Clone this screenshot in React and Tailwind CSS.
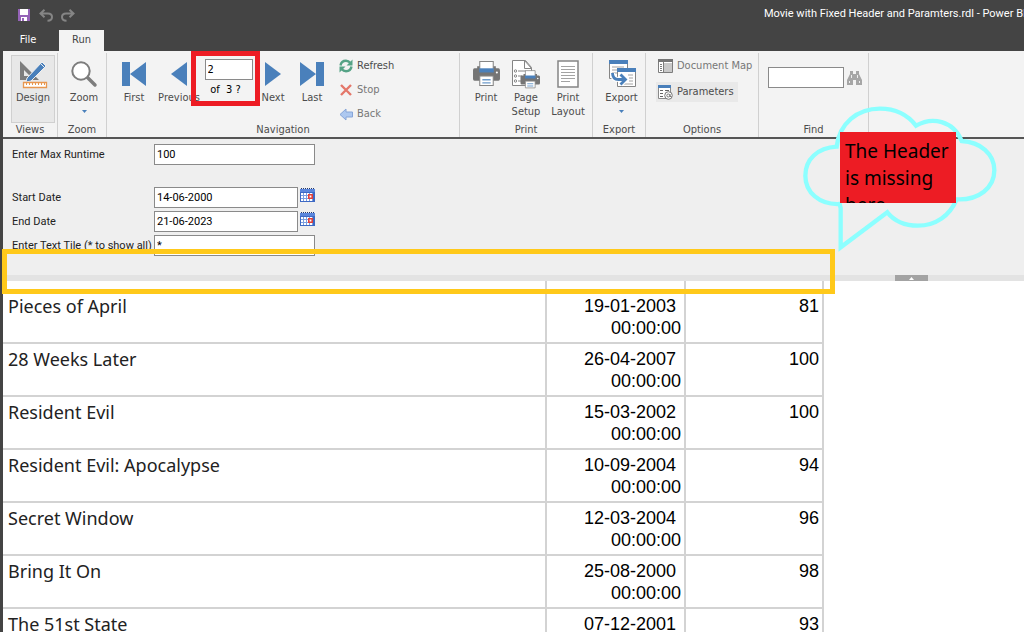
const MOVIES = [
  { title: 'Pieces of April', date: '19-01-2003', runtime: 81 },
  { title: '28 Weeks Later', date: '26-04-2007', runtime: 100 },
  { title: 'Resident Evil', date: '15-03-2002', runtime: 100 },
  { title: 'Resident Evil: Apocalypse', date: '10-09-2004', runtime: 94 },
  { title: 'Secret Window', date: '12-03-2004', runtime: 96 },
  { title: 'Bring It On', date: '25-08-2000', runtime: 98 },
  { title: 'The 51st State', date: '07-12-2001', runtime: 93 },
];

const inputCls = 'h-[21px] border border-[#8a8a8a] bg-white px-[2px] text-[11px] text-black outline-none';

function SaveIcon() {
  return (
    <svg width="12" height="12" viewBox="0 0 12 12">
      <path d="M0 0h12v12H0z" fill="#9563b8" />
      <path d="M2 0h8v6H2z" fill="#fff" />
      <path d="M3 8h6v4H3z" fill="#fff" />
      <path d="M4 9h2v3H4z" fill="#9563b8" />
    </svg>
  );
}

function UndoIcon({ flip }) {
  return (
    <svg width="14" height="13" viewBox="0 0 14 13" className={flip ? '-scale-x-100' : ''} fill="none" stroke="#858585" strokeWidth="2">
      <path d="M5.500.8 1.500 4.500 5.500 8.200M1.500 4.500h7.500c2.600 0 4 1.500 4 3.600s-1.500 3.700-4.500 3.700" />
    </svg>
  );
}

function DesignIcon() {
  return (
    <svg width="30" height="30" viewBox="0 0 30 30">
      <path d="M2 2v19h19zM6 11l6 6H6z" fill="#7d7d7d" fillRule="evenodd" />
      <path d="M9 19 24 3l4 4-15 15-5 1z" fill="#4a80bb" stroke="#f0f0f0" />
      <path d="m22.500 4.500 4 4" stroke="#f0f0f0" />
      <path d="M5.500 23.500h23v5h-23z" fill="#fff" stroke="#e8974f" strokeWidth="1.300" />
      <path d="M8.500 24v2M11.500 24v2M14.500 24v2M17.500 24v2M20.500 24v2M23.500 24v2M26.500 24v2" stroke="#e8974f" />
    </svg>
  );
}

function ZoomIcon() {
  return (
    <svg width="28" height="28" viewBox="0 0 28 28">
      <path d="m17 17 8 8" stroke="#7d7d7d" strokeWidth="3.500" strokeLinecap="round" />
      <circle cx="11" cy="11" r="8.700" fill="#fff" stroke="#7d7d7d" strokeWidth="2" />
    </svg>
  );
}

function FirstIcon({ flip }) {
  return (
    <svg width="24" height="26" viewBox="0 0 24 26" className={flip ? '-scale-x-100' : ''} fill="#4a80bb">
      <path d="M0 1h8v24H0zM24 1v24L8 13z" />
    </svg>
  );
}

function ArrowIcon({ flip }) {
  return (
    <svg width="16" height="26" viewBox="0 0 16 26" className={flip ? '-scale-x-100' : ''} fill="#4a80bb">
      <path d="M16 1v24L0 13z" />
    </svg>
  );
}

function RefreshIcon() {
  return (
    <svg width="14" height="14" viewBox="0 0 14 14" fill="none" stroke="#55a386" strokeWidth="2.400">
      <path d="M1.500 6.500C2 3.500 4.500 1.800 7 1.800c2 0 3.200.8 4.500 2.200M12.500 7.500c-.5 3-3 4.700-5.500 4.700-2 0-3.200-.8-4.500-2.200" />
      <path d="M13.500.5v6H7.500zM.5 13.500v-6h6z" fill="#55a386" stroke="none" />
    </svg>
  );
}

function StopIcon() {
  return (
    <svg width="14" height="14" viewBox="0 0 14 14" fill="none" stroke="#e4776a" strokeWidth="2.400">
      <path d="m2 2 10 10M12 2 2 12" />
    </svg>
  );
}

function BackIcon() {
  return (
    <svg width="14" height="14" viewBox="0 0 14 14">
      <path d="M1 7.500 7 2v3h6.500v5H7v3z" fill="#adc8f0" stroke="#86a5d8" />
    </svg>
  );
}

function PrintShape() {
  return (
    <>
      <path d="M1.500 8h23q1.500 0 1.500 2v8q0 2-1.500 2h-23Q0 20 0 18v-8q0-2 1.500-2z" fill="#757575" />
      <path d="M4 6h18v6H4z" fill="#757575" />
      <path d="M6.500 1.500h13v8h-13z" fill="#fff" stroke="#858585" />
      <path d="M6 8h14v4H6z" fill="#4a80bb" />
      <path d="M6.500 15.500h13v9h-13z" fill="#fff" stroke="#858585" />
      <path d="M9 19h8M9 22h8" stroke="#6d9bcb" strokeWidth="1.300" />
      <circle cx="23" cy="12" r="1" fill="#fff" />
    </>
  );
}

function PrintIcon() {
  return (
    <svg width="27" height="28" viewBox="0 0 26 27">
      <PrintShape />
    </svg>
  );
}

function PageSetupIcon() {
  return (
    <svg width="30" height="30" viewBox="0 0 30 30">
      <path d="M1.500 1.500h13l6 7v18h-19z" fill="#fff" stroke="#858585" />
      <path d="M13.500 1.500v8h7z" fill="#fff" stroke="#858585" />
      <path d="M7 12h8M7 17h4M7 22h4" stroke="#858585" />
      <g fill="none" stroke="#858585">
        <circle cx="4.500" cy="12" r="1.200" />
        <circle cx="4.500" cy="17" r="1.200" />
        <circle cx="4.500" cy="22" r="1.200" />
      </g>
      <g transform="translate(9.500 10.500) scale(.75)">
        <PrintShape />
      </g>
    </svg>
  );
}

function PrintLayoutIcon() {
  return (
    <svg width="22" height="28" viewBox="0 0 22 28">
      <path d="M1 1h20v26H1z" fill="#fff" stroke="#858585" strokeWidth="1.500" />
      <path d="M4 6.500h14M4 9.500h14M4 12.500h14M4 15.500h14M4 18.500h14M4 21.500h9" stroke="#a3a3a3" />
    </svg>
  );
}

function ExportIcon() {
  return (
    <svg width="28" height="28" viewBox="0 0 28 28">
      <path d="M1.500 1.500h18v17h-18z" fill="#fff" stroke="#858585" />
      <path d="M1 0h19v4H1z" fill="#4a80bb" />
      <path d="M4 7h12M4 10h5M4 13h5" stroke="#a3a3a3" />
      <path d="M9.500 9.500h18v17h-18z" fill="#fff" stroke="#858585" />
      <path d="M9 8h19v4H9z" fill="#4a80bb" />
      <path d="M20 15h5M21 18h4M21 21h4M14 24h11" stroke="#a3a3a3" />
      <path d="M4.500 13c0 4.500 2 6.500 6 6.500h6M12.500 14.500l5 5-5 5" fill="none" stroke="#fff" strokeWidth="5" />
      <path d="M4.500 13c0 4.500 2 6.500 6 6.500h6M12.500 14.500l5 5-5 5" fill="none" stroke="#4a80bb" strokeWidth="2.800" />
    </svg>
  );
}

function DocMapIcon() {
  return (
    <svg width="15" height="14" viewBox="0 0 15 14">
      <path d="M.5.5h14v13H.5z" fill="#fff" stroke="#7d7d7d" />
      <path d="M0 0h15v3H0z" fill="#757575" />
      <path d="M6 4h8v9H6z" fill="#c9c9c9" />
      <path d="M5.500 3v10M2 5.500h2M2 7.500h2M2 9.500h2M2 11.500h2" stroke="#7d7d7d" />
    </svg>
  );
}

function ParamsIcon() {
  return (
    <svg width="15" height="15" viewBox="0 0 15 15">
      <path d="M.5 1.500h12v12H.5z" fill="#fff" stroke="#8a8a8a" />
      <path d="M0 0h13v3H0z" fill="#4a80bb" />
      <path d="M2 5.500h3M2 8.500h3M2 11.500h3M7 5.500h4" stroke="#666" />
      <circle cx="10.500" cy="10.500" r="3.800" fill="#fff" stroke="#777" />
      <circle cx="10.300" cy="10.500" r="1.500" fill="none" stroke="#777" />
      <path d="M12 9v2.500h1.500" fill="none" stroke="#777" />
    </svg>
  );
}

function FindIcon() {
  return (
    <svg width="15" height="14" viewBox="0 0 15 14" fill="#a6a6a6">
      <path d="M3 0h3v3h3V0h3v3l3 6v5H9V9H6v5H0V9l3-6z" />
      <path d="M2 10h1v2H2zM12 10h1v2h-1zM4 4h1v3H4zM10 4h1v3h-1z" fill="#eee" />
    </svg>
  );
}

function CalendarIcon() {
  return (
    <svg width="15" height="15" viewBox="0 0 15 15">
      <path d="M0 1h15v13H0z" fill="#3d69c4" />
      <path d="M0 1h15v3H0z" fill="#5b86dc" />
      <path d="M1 5h11v8H1z" fill="#fff" />
      <path d="M3.500 5v8M6.500 5v8M9.500 5v8M12.500 5v8M1 7.500h12M1 10.500h12" stroke="#7c9fe0" />
      <path d="M1 .5h13" stroke="#22376b" strokeDasharray="1 1" />
      <path d="M8.800 6.800h3.400v3.400H8.800z" fill="#fff" stroke="#e0403a" strokeWidth="1.600" />
    </svg>
  );
}

function RibbonGroup({ label, className, children }) {
  return (
    <section className={`flex shrink-0 flex-col border-r border-[#d0d0d0] ${className}`}>
      <div className="flex h-[70px] items-start">{children}</div>
      <h2 className="text-center leading-[14px]">{label}</h2>
    </section>
  );
}

function RibbonButton({ icon, label, className, menu }) {
  return (
    <button type="button" className={`flex h-[66px] flex-col items-center leading-[14px] ${className}`}>
      <span className="flex h-[35px] items-center">{icon}</span>
      <span>{label}</span>
      {menu && (
        <svg width="5" height="3" viewBox="0 0 5 3" className="mt-[5px]" fill="#4a80bb">
          <path d="M0 0h5L2.500 3z" />
        </svg>
      )}
    </button>
  );
}

function SmallButton({ icon, label, className }) {
  return (
    <button type="button" className={`flex items-center gap-1 leading-[14px] ${className}`}>
      {icon}
      {label}
    </button>
  );
}

function Param({ id, label, value, date, className }) {
  return (
    <div className={`flex h-[21px] ${className || ''}`}>
      <label htmlFor={id} className="w-[142px] shrink-0 whitespace-nowrap leading-[21px]">{label}</label>
      <input id={id} type="text" defaultValue={value} className={`${inputCls} ${date ? 'w-36' : 'w-[161px]'}`} />
      {date && (
        <button type="button" aria-label="Pick date" className="ml-[2px] mt-px h-[15px]">
          <CalendarIcon />
        </button>
      )}
    </div>
  );
}

function Callout() {
  return (
    <div className="absolute left-[800px] top-[100px]">
      <svg width="200" height="155" viewBox="60 15 600 465" fill="none" stroke="#8cffff" strokeWidth="13">
        <path d="M170 155C178 85 232 41 300 41c46 0 84 20 108 51 48-28 112-16 137 46 56 3 98 38 98 88 0 52-46 90-113 87-21 50-64 79-116 79-40 0-72-15-92-40L182 457V340l-3-13C118 330 76 292 76 242c0-48 36-84 94-87z" />
      </svg>
      <p className="absolute left-10 top-8 h-[71px] w-[116px] overflow-hidden bg-[#ed1c24] px-[5px] pt-[6px] font-['Noto_Sans',sans-serif] text-[19px] leading-[27px] text-black">
        The Header is missing here
      </p>
    </div>
  );
}

export default function App() {
  return (
    <div className="relative h-screen overflow-hidden bg-[#444] pl-[3px] font-['Roboto',sans-serif] text-[11px] text-[#222]">
      <div className="flex h-full flex-col bg-white">
        <header className="bg-[#444] text-white">
          <div className="flex h-[30px] items-center pl-[15px]">
            <button type="button" aria-label="Save"><SaveIcon /></button>
            <button type="button" aria-label="Undo" className="ml-[9px]"><UndoIcon /></button>
            <button type="button" aria-label="Redo" className="ml-2"><UndoIcon flip /></button>
            <h1 className="ml-auto w-[260px] shrink-0 overflow-hidden whitespace-nowrap pb-[2px]">
              Movie with Fixed Header and Paramters.rdl - Power BI R
            </h1>
          </div>
          <nav className="flex h-[21px] font-['DejaVu_Sans_Condensed','Noto_Sans',sans-serif]">
            <button type="button" className="w-14 pr-[6px]">File</button>
            <button type="button" className="w-[45px] bg-[#f3f3f3] text-[#444]">Run</button>
          </nav>
        </header>

        <div className="flex h-[88px] shrink-0 border-b-2 border-[#555] bg-[#f3f3f3] pt-[2px] font-['DejaVu_Sans_Condensed','Noto_Sans',sans-serif] text-[#4c4c4c]">
          <RibbonGroup label="Views" className="w-[55px]">
            <RibbonButton icon={<DesignIcon />} label="Design" className="ml-[9px] mt-[3px] w-[42px] bg-[#e8e8e8] outline outline-[#d0d0d0]" />
          </RibbonGroup>
          <RibbonGroup label="Zoom" className="w-[49px]">
            <RibbonButton icon={<ZoomIcon />} label="Zoom" className="mt-[3px] w-full pl-[4px]" menu />
          </RibbonGroup>
          <RibbonGroup label="Navigation" className="w-[353px]">
            <RibbonButton icon={<FirstIcon />} label="First" className="ml-[7px] mt-[3px] w-10" />
            <RibbonButton icon={<ArrowIcon />} label="Previous" className="mt-[3px] w-[50px]" />
            <div className="relative -ml-[13px] -mt-[2px] flex h-[55px] w-[69px] flex-col items-center border-[5px] border-[#ed1c24] pl-[6px] pt-[3px] text-black">
              <input aria-label="Current page" type="text" defaultValue="2" className={`${inputCls} w-12`} />
              <span className="mr-[6px] mt-[3px] leading-[14px]">of&nbsp; 3 ?</span>
            </div>
            <RibbonButton icon={<ArrowIcon flip />} label="Next" className="mt-[3px] w-[26px]" />
            <RibbonButton icon={<FirstIcon flip />} label="Last" className="ml-[6px] mt-[3px] w-10" />
            <div className="ml-[7px] mt-[6px] flex flex-col gap-[10px]">
              <SmallButton icon={<RefreshIcon />} label="Refresh" />
              <SmallButton icon={<StopIcon />} label="Stop" className="text-[#777]" />
              <SmallButton icon={<BackIcon />} label="Back" className="text-[#777]" />
            </div>
          </RibbonGroup>
          <RibbonGroup label="Print" className="w-[133px]">
            <RibbonButton icon={<PrintIcon />} label="Print" className="ml-[6px] mt-[3px] w-10" />
            <RibbonButton icon={<PageSetupIcon />} label="Page Setup" className="mt-[3px] w-10" />
            <RibbonButton icon={<PrintLayoutIcon />} label="Print Layout" className="mt-[3px] w-[44px]" />
          </RibbonGroup>
          <RibbonGroup label="Export" className="w-[53px]">
            <RibbonButton icon={<ExportIcon />} label="Export" className="mt-[3px] w-full pl-[5px]" menu />
          </RibbonGroup>
          <RibbonGroup label="Options" className="w-[113px]">
            <div className="ml-[10px] mt-1 flex flex-col items-start gap-[7px]">
              <SmallButton icon={<DocMapIcon />} label="Document Map" className="h-[18px] whitespace-nowrap pl-[2px] text-[#777]" />
              <SmallButton icon={<ParamsIcon />} label="Parameters" className="h-5 bg-[#e9e9e9] pl-[2px] pr-1" />
            </div>
          </RibbonGroup>
          <RibbonGroup label="Find" className="w-[110px]">
            <form className="ml-[9px] mt-[14px] flex items-center gap-[3px]">
              <input aria-label="Find text" type="text" className={`${inputCls} w-[76px]`} />
              <button type="button" aria-label="Find"><FindIcon /></button>
            </form>
          </RibbonGroup>
        </div>

        <form className="flex shrink-0 flex-col gap-[3px] bg-[#efefef] pb-[19px] pl-[9px] pt-[5px]">
          <Param id="runtime" label="Enter Max Runtime" value="100" className="mb-[19px]" />
          <Param id="start" label="Start Date" value="14-06-2000" date />
          <Param id="end" label="End Date" value="21-06-2023" date />
          <Param id="tile" label="Enter Text Tile (* to show all)" value="*" />
        </form>
        <div className="flex h-[6px] shrink-0 justify-end bg-[#e3e3e3] pr-24">
          <button type="button" aria-label="Collapse parameters" className="flex h-[6px] w-[33px] items-center justify-center bg-[#a3a3a3]">
            <svg width="5" height="3" viewBox="0 0 5 3" fill="#fff"><path d="M0 3h5L2.500 0z" /></svg>
          </button>
        </div>

        <main className="min-h-0 flex-1 overflow-hidden">
          <table className="w-[821px] table-fixed border-collapse text-[18px] leading-[22px] text-black">
            <colgroup>
              <col />
              <col className="w-[139px]" />
              <col className="w-[138px]" />
            </colgroup>
            <tbody>
              <tr className="h-[9px]">
                <td className="border-r-2 border-[#d3d3d3]" />
                <td className="border-r-2 border-[#d3d3d3]" />
                <td className="border-r-2 border-[#d3d3d3]" />
              </tr>
              {MOVIES.map((movie) => (
                <tr key={movie.title} className="h-[53px] align-top">
                  <td className="border-2 border-l-0 border-[#d3d3d3] px-[5px] pt-1 font-['Noto_Sans',sans-serif] text-[#222]">{movie.title}</td>
                  <td className="border-2 border-[#d3d3d3] pr-[3px] pt-1 text-right font-['Liberation_Sans',sans-serif]">
                    {movie.date}&nbsp;<br />00:00:00
                  </td>
                  <td className="border-2 border-[#d3d3d3] pr-[3px] pt-1 text-right font-['Liberation_Sans',sans-serif]">{movie.runtime}</td>
                </tr>
              ))}
            </tbody>
          </table>
        </main>
      </div>

      <div className="pointer-events-none absolute left-[2px] top-[249px] h-[45px] w-[833px] border-[5px] border-[#ffc91a]" />
      <Callout />
    </div>
  );
}
